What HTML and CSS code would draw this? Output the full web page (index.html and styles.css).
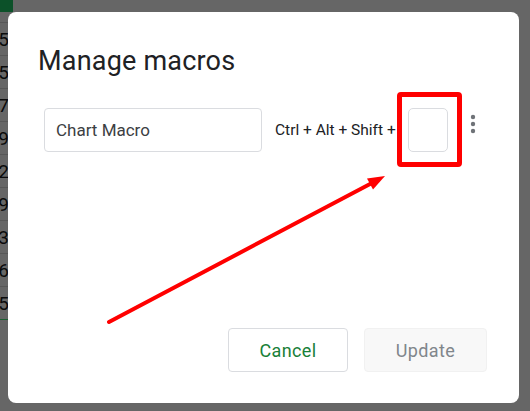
FILE: index.html
```html
<!DOCTYPE html>
<html>
<head>
<meta charset="utf-8">
<link rel="stylesheet" href="styles.css">
</head>
<body>
<div class="sheet">
  <div class="corner"></div>
  <div class="rows">
    <div class="cell">5</div>
    <div class="cell">5</div>
    <div class="cell">7</div>
    <div class="cell">9</div>
    <div class="cell">2</div>
    <div class="cell">9</div>
    <div class="cell">3</div>
    <div class="cell">6</div>
    <div class="cell last">5</div>
  </div>
</div>

<div class="dialog">
  <h1 class="title">Manage macros</h1>
  <div class="macro-row">
    <div class="name-field">Chart Macro</div>
    <div class="shortcut-label">Ctrl + Alt + Shift +</div>
    <div class="key-field"></div>
    <svg class="kebab" width="24" height="24" viewBox="0 0 24 24">
      <circle cx="12" cy="5" r="2.2"/>
      <circle cx="12" cy="12" r="2.2"/>
      <circle cx="12" cy="19" r="2.2"/>
    </svg>
  </div>
  <div class="footer">
    <button class="btn btn-cancel">Cancel</button>
    <button class="btn btn-update">Update</button>
  </div>
</div>

<svg class="annotation" width="530" height="411" viewBox="0 0 530 411">
  <rect x="399.5" y="94.5" width="60" height="70" rx="1.5" fill="none" stroke="#ff0000" stroke-width="5"/>
  <line x1="109" y1="322" x2="371" y2="183.5" stroke="#ff0000" stroke-width="4" stroke-linecap="round"/>
  <polygon points="385,176 367,178.5 373,189.5" fill="#ff0000"/>
</svg>
</body>
</html>
```

FILE: styles.css
```css
html, body {
  margin: 0;
  padding: 0;
}

body {
  width: 530px;
  height: 411px;
  background: #666666;
  overflow: hidden;
  position: relative;
  font-family: Roboto, "Liberation Sans", sans-serif;
}

.sheet {
  width: 40px;
}

.corner {
  width: 13px;
  height: 12px;
  background: #0c5129;
}

.rows {
  padding-top: 10px;
}

.cell {
  height: 32px;
  border-top: 1px solid #575757;
  width: 11px;
  margin-left: -2px;
  text-align: right;
  font-size: 19px;
  line-height: 33px;
  color: #0a0a0a;
}

.cell.last {
  border-bottom: 1px solid #1c5e32;
}

.dialog {
  position: absolute;
  left: 8px;
  top: 12px;
  width: 511px;
  height: 391px;
  box-sizing: border-box;
  background: #ffffff;
  border-radius: 8px;
  padding: 0 32px 31px 30px;
  display: flex;
  flex-direction: column;
}

.title {
  margin: 33px 0 0 0;
  font-size: 27px;
  letter-spacing: 0.2px;
  line-height: 32px;
  font-weight: 400;
  color: #202124;
}

.macro-row {
  margin-top: 31px;
  margin-left: 6px;
  display: flex;
  align-items: center;
  height: 44px;
}

.macro-row > * {
  flex: none;
}

.name-field {
  width: 218px;
  height: 44px;
  box-sizing: border-box;
  border: 1px solid #dadce0;
  border-radius: 4px;
  padding-left: 11px;
  font-size: 17px;
  line-height: 42px;
  color: #3c4043;
}

.shortcut-label {
  width: 146px;
  padding-left: 13px;
  box-sizing: border-box;
  white-space: nowrap;
  font-size: 15.5px;
  color: #202124;
}

.key-field {
  width: 40px;
  height: 44px;
  box-sizing: border-box;
  border: 1px solid #dadce0;
  border-radius: 5px;
  background: #fff;
}

.kebab {
  align-self: flex-start;
  margin-top: 4px;
  margin-left: 13px;
  fill: #6f7378;
}

.footer {
  margin-top: auto;
  display: flex;
  justify-content: flex-end;
  gap: 16px;
}

.btn {
  height: 44px;
  border-radius: 4px;
  font-family: Roboto, "Liberation Sans", sans-serif;
  font-size: 18px;
  font-weight: 400;
  letter-spacing: 0.4px;
  padding: 0;
}

.btn-cancel {
  width: 120px;
  background: #ffffff;
  border: 1px solid #dadce0;
  color: #188038;
}

.btn-update {
  width: 123px;
  background: #f8f8f8;
  border: 1px solid #f1f1f1;
  color: #80868b;
}

.annotation {
  position: absolute;
  left: 0;
  top: 0;
  pointer-events: none;
}
```
